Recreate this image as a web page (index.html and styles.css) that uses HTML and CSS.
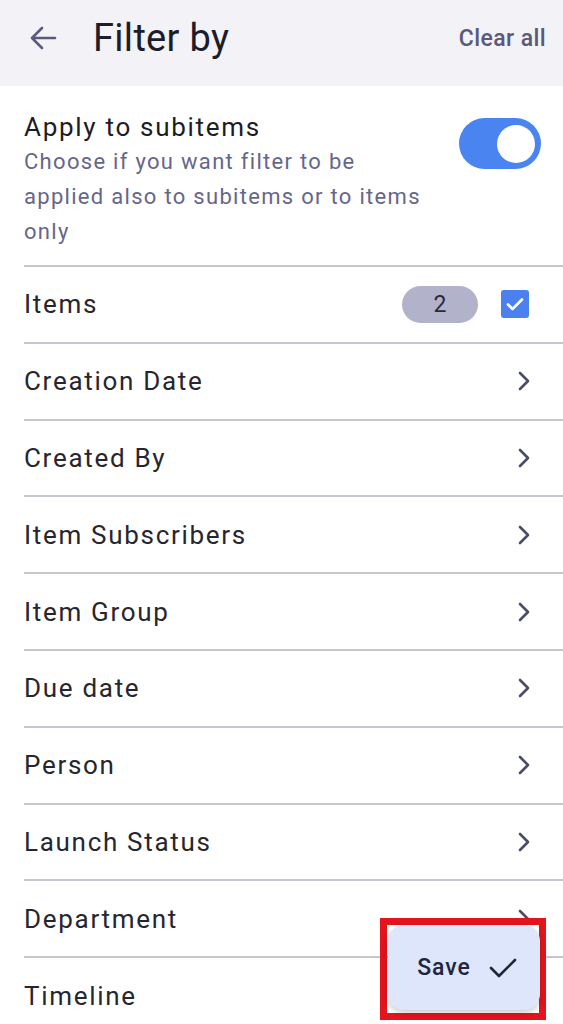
FILE: index.html
```html
<!DOCTYPE html>
<html lang="en">
<head>
    <meta charset="UTF-8">
    <meta name="viewport" content="width=device-width, initial-scale=1.0">
    <title>Filter by</title>
    <link rel="stylesheet" href="styles.css">
</head>
<body>
    <header class="topbar">
        <svg class="back" width="28" height="24" viewBox="0 0 28 24">
            <path d="M26 12H3M13 2L3 12l10 10" fill="none" stroke="#5a5a80" stroke-width="2.6" stroke-linecap="round" stroke-linejoin="round"/>
        </svg>
        <h1>Filter by</h1>
        <a class="clear" href="#">Clear all</a>
    </header>

    <section class="apply">
        <div class="apply-text">
            <div class="apply-title">Apply to subitems</div>
            <div class="apply-desc">Choose if you want filter to be applied also to subitems or to items only</div>
        </div>
        <div class="toggle"><span class="knob"></span></div>
    </section>

    <ul class="list">
        <li class="row">
            <span>Items</span>
            <span class="badge">2</span>
            <span class="check">
                <svg width="18" height="14" viewBox="0 0 18 14"><path d="M2 7.5l4.5 4.5L16 2.5" fill="none" stroke="#fff" stroke-width="2.6" stroke-linecap="round" stroke-linejoin="round"/></svg>
            </span>
        </li>
        <li class="row"><span>Creation Date</span><svg class="chev" width="14" height="20" viewBox="0 0 14 20"><path d="M3 2l8 8-8 8" fill="none" stroke="#4b4b6b" stroke-width="2.6" stroke-linecap="round" stroke-linejoin="round"/></svg></li>
        <li class="row"><span>Created By</span><svg class="chev" width="14" height="20" viewBox="0 0 14 20"><path d="M3 2l8 8-8 8" fill="none" stroke="#4b4b6b" stroke-width="2.6" stroke-linecap="round" stroke-linejoin="round"/></svg></li>
        <li class="row"><span>Item Subscribers</span><svg class="chev" width="14" height="20" viewBox="0 0 14 20"><path d="M3 2l8 8-8 8" fill="none" stroke="#4b4b6b" stroke-width="2.6" stroke-linecap="round" stroke-linejoin="round"/></svg></li>
        <li class="row"><span>Item Group</span><svg class="chev" width="14" height="20" viewBox="0 0 14 20"><path d="M3 2l8 8-8 8" fill="none" stroke="#4b4b6b" stroke-width="2.6" stroke-linecap="round" stroke-linejoin="round"/></svg></li>
        <li class="row"><span>Due date</span><svg class="chev" width="14" height="20" viewBox="0 0 14 20"><path d="M3 2l8 8-8 8" fill="none" stroke="#4b4b6b" stroke-width="2.6" stroke-linecap="round" stroke-linejoin="round"/></svg></li>
        <li class="row"><span>Person</span><svg class="chev" width="14" height="20" viewBox="0 0 14 20"><path d="M3 2l8 8-8 8" fill="none" stroke="#4b4b6b" stroke-width="2.6" stroke-linecap="round" stroke-linejoin="round"/></svg></li>
        <li class="row"><span>Launch Status</span><svg class="chev" width="14" height="20" viewBox="0 0 14 20"><path d="M3 2l8 8-8 8" fill="none" stroke="#4b4b6b" stroke-width="2.6" stroke-linecap="round" stroke-linejoin="round"/></svg></li>
        <li class="row"><span>Department</span><svg class="chev" width="14" height="20" viewBox="0 0 14 20"><path d="M3 2l8 8-8 8" fill="none" stroke="#4b4b6b" stroke-width="2.6" stroke-linecap="round" stroke-linejoin="round"/></svg></li>
        <li class="row"><span>Timeline</span><svg class="chev" width="14" height="20" viewBox="0 0 14 20"><path d="M3 2l8 8-8 8" fill="none" stroke="#4b4b6b" stroke-width="2.6" stroke-linecap="round" stroke-linejoin="round"/></svg></li>
    </ul>

    <div class="save-mark">
        <button class="save">
            Save
            <svg width="28" height="22" viewBox="0 0 28 22"><path d="M2 11l8 8L26 3" fill="none" stroke="#1f2540" stroke-width="2.6" stroke-linecap="round" stroke-linejoin="round"/></svg>
        </button>
    </div>
</body>
</html>
```

FILE: styles.css
```css
body {
    margin: 0;
    padding: 0;
    font-family: Roboto, "Noto Sans", sans-serif;
    background-color: #fff;
    color: #23232f;
    height: 1024px;
    overflow: hidden;
}
.topbar {
    height: 86px;
    background-color: #f3f2f7;
    display: flex;
    align-items: center;
    padding: 0 17px 0 29px;
    box-sizing: border-box;
}
.back {
    margin-top: -10px;
}
.topbar h1 {
    margin: -10px 0 0 36px;
    font-size: 38px;
    font-weight: 400;
    letter-spacing: 0.3px;
    color: #1c1c2a;
    flex: 1;
}
.clear {
    margin-top: -10px;
    font-size: 23px;
    font-weight: 500;
    letter-spacing: 0.4px;
    color: #595978;
    text-decoration: none;
}
.apply {
    display: flex;
    justify-content: space-between;
    padding: 24px 22px 16px 24px;
}
.apply-text {
    width: 410px;
}
.apply-title {
    font-size: 26px;
    line-height: 34px;
    letter-spacing: 1.7px;
    color: #1c1c28;
}
.apply-desc {
    font-size: 22px;
    line-height: 35px;
    letter-spacing: 1.3px;
    color: #66668a;
}
.toggle {
    width: 82px;
    height: 51px;
    border-radius: 26px;
    background-color: #4a84f0;
    margin-top: 8px;
    display: flex;
    align-items: center;
    justify-content: flex-end;
    padding-right: 6px;
    box-sizing: border-box;
}
.knob {
    width: 38px;
    height: 38px;
    border-radius: 50%;
    background-color: #fff;
}
.list {
    list-style: none;
    margin: 0 0 0 24px;
    padding: 0;
}
.row {
    height: 76.8px;
    box-sizing: border-box;
    border-top: 2px solid #c6c6cf;
    display: flex;
    align-items: center;
    font-size: 26px;
    letter-spacing: 1.7px;
    color: #26262f;
    padding-right: 34px;
}
.row span:first-child {
    flex: 1;
}
.badge {
    width: 76px;
    height: 37px;
    border-radius: 19px;
    background-color: #b2b2cb;
    color: #2a2a3c;
    font-size: 23px;
    letter-spacing: 0;
    display: flex;
    align-items: center;
    justify-content: center;
    margin-right: 23px;
}
.check {
    width: 28px;
    height: 28px;
    border-radius: 3px;
    background-color: #4a80f0;
    display: flex;
    align-items: center;
    justify-content: center;
}
.chev {
    margin-right: -2px;
}
.save-mark {
    position: absolute;
    left: 380px;
    top: 918px;
    width: 166px;
    height: 102px;
    border: 7px solid #e3141b;
    box-sizing: border-box;
}
.save {
    position: absolute;
    left: 1px;
    top: 0;
    width: 152px;
    height: 85px;
    border: none;
    border-radius: 16px;
    background-color: #dde6fb;
    box-shadow: 0 3px 6px rgba(0, 0, 0, 0.2);
    font-family: Roboto, sans-serif;
    font-size: 23px;
    font-weight: 500;
    letter-spacing: 1px;
    color: #1f2540;
    display: flex;
    align-items: center;
    justify-content: center;
    gap: 18px;
    padding: 0 0 0 6px;
}
```
